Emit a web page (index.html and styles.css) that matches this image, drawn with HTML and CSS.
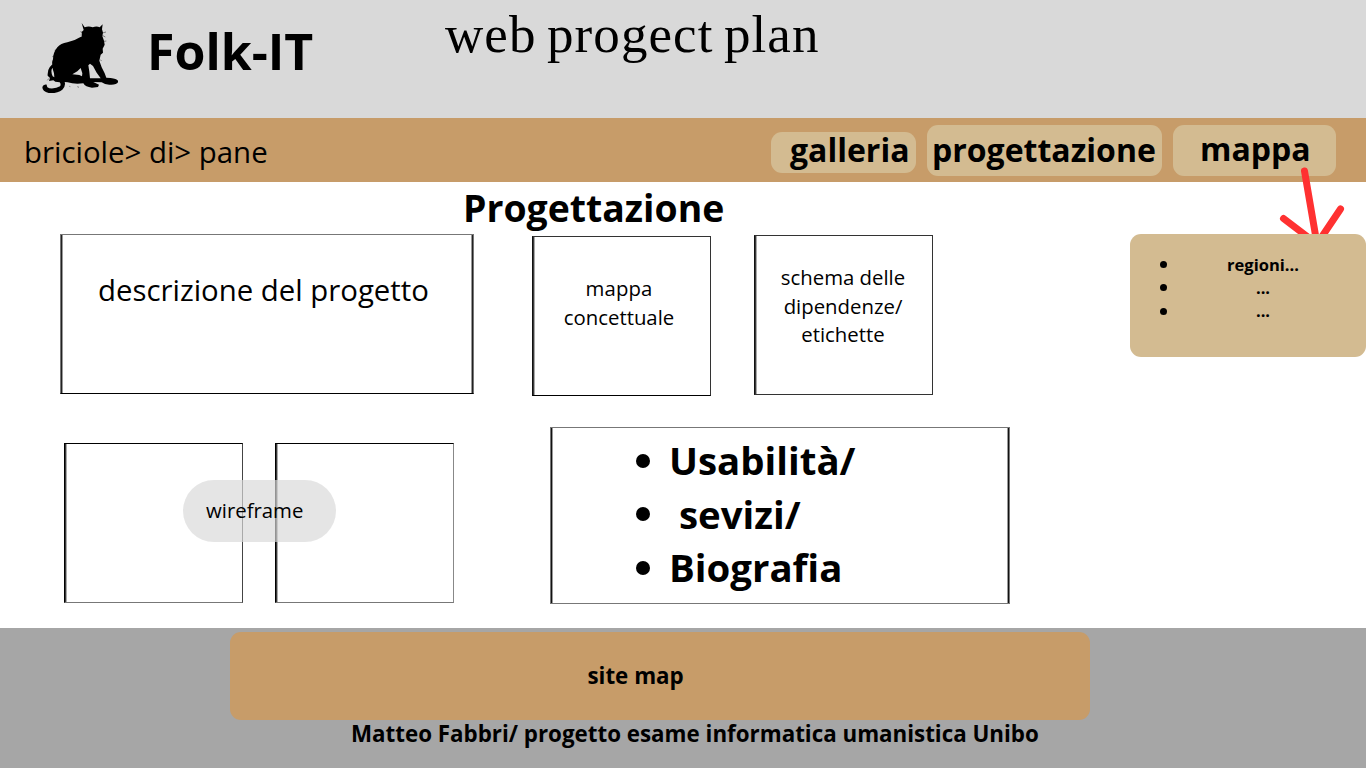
FILE: index.html
```html
<!DOCTYPE html>
<html lang="it">
<head>
<meta charset="utf-8">
<title>Folk-IT</title>
<link rel="stylesheet" href="styles.css">
</head>
<body>
<header class="header">
  <svg class="logo" width="78" height="74" viewBox="30 33 234 222" aria-hidden="true">
    <path fill-rule="evenodd" d="M155 39L164 52Q176 47 188 52Q200 47 209 52L218 43L216 58L219 68L217 78L222 92L224 104L218 116L219 128L212 134L208 152L215 172L224 190L229 203L242 204Q262 206 265 214Q263 224 244 224Q226 226 215 217L190 216L207 224L204 231L186 233Q166 231 160 220Q132 223 113 217L104 216Q108 228 97 239Q82 251 56 249Q37 245 37 231Q40 221 51 224Q48 231 58 235Q78 237 90 229Q94 222 89 217L76 215L70 211L57 213L60 204L53 197Q52 181 59 172L67 163Q65 156 69 148Q69 128 82 112Q92 100 112 97Q134 92 147 83L156 79L155 66L161 60ZM67 173Q61 184 68 199L73 202L72 190ZM152 174L142 184L127 193L148 195L156 199L157 190ZM180 161L175 166L178 185L180 205L212 205L200 188L189 168Z"/>
    <path d="M217 69l11-3M217 76l9 5M221 94l8-1M159 68l-8-3M158 76l-6-1M72 138l-5 2M78 120l-4 1M57 205l-5 6M211 150l4 2M142 230l5 2M118 229l3 1" fill="none" stroke="#000" stroke-width="1.3"/>
  </svg>
  <span class="brand">Folk-IT</span>
  <span class="title">web progect plan</span>
</header>
<nav class="nav">
  <span class="crumbs">briciole&gt; di&gt; pane</span>
  <a class="pill pill-gallery">galleria</a>
  <a class="pill pill-design">progettazione</a>
  <a class="pill pill-map">mappa</a>
  <svg class="arrow" width="70" height="82" viewBox="1276 164 70 82" aria-hidden="true">
    <path d="M1304.500 171L1316.500 241M1283.500 218.500L1317 244L1340.500 209" fill="none" stroke="#ff3131" stroke-width="7" stroke-linecap="round" stroke-linejoin="round"/>
  </svg>
</nav>
<main class="main">
  <h1 class="heading">Progettazione</h1>
  <section class="row row-top">
    <div class="box box-description"><p class="large">descrizione del progetto</p></div>
    <div class="box box-concept"><p>mappa<br>concettuale</p></div>
    <div class="box box-schema"><p>schema delle<br>dipendenze/<br>etichette</p></div>
    <ul class="menu">
      <li><span>regioni...</span></li>
      <li><span>...</span></li>
      <li><span>...</span></li>
    </ul>
  </section>
  <section class="row row-bottom">
    <div class="wireframes">
      <div class="box frame"></div>
      <div class="box frame frame-second"></div>
      <span class="badge">wireframe</span>
    </div>
    <ul class="box topics">
      <li>Usabilità/</li>
      <li>&nbsp;sevizi/</li>
      <li>Biografia</li>
    </ul>
  </section>
</main>
<footer class="footer">
  <div class="sitemap">site map</div>
  <p class="credits">Matteo Fabbri/ progetto esame informatica umanistica Unibo</p>
</footer>
</body>
</html>
```
FILE: styles.css
```css
* { box-sizing: border-box; }
body {
  margin: 0;
  width: 1366px;
  height: 768px;
  overflow: hidden;
  background: #fff;
  color: #000;
  font-family: "Open Sans", "Noto Sans", sans-serif;
}
p, h1, ul { margin: 0; padding: 0; list-style: none; }
.header {
  display: flex;
  align-items: flex-start;
  height: 118px;
  background: #d9d9d9;
  white-space: nowrap;
}
.logo { margin: 21px 0 0 40px; flex: none; }
.brand {
  width: 298px;
  margin: 21px 0 0 26px;
  padding-left: 3px;
  font-size: 50px;
  line-height: 60px;
  font-weight: 700;
}
.title {
  margin: 4px 0 0 3px;
  font-family: "Liberation Serif", serif;
  font-size: 53px;
  line-height: 60px;
  letter-spacing: 1.1px;
  word-spacing: -4px;
}
.nav {
  position: relative;
  display: flex;
  align-items: flex-start;
  height: 64px;
  background: #c79c69;
  white-space: nowrap;
}
.crumbs {
  width: 747px;
  margin: 14px 0 0 24px;
  font-size: 29.400px;
  line-height: 40px;
}
.pill {
  flex: none;
  border-radius: 11px;
  background: #d3bb91;
  font-size: 32px;
  font-weight: 700;
}
.pill-gallery { width: 145px; height: 41px; margin-top: 14px; padding-left: 19px; line-height: 36px; }
.pill-design { width: 235px; height: 51px; margin: 7px 0 0 11px; padding-left: 5px; line-height: 50px; }
.pill-map { width: 163px; height: 51px; margin: 7px 0 0 11px; padding-left: 27px; line-height: 48px; }
.arrow { position: absolute; left: 1276px; top: 46px; }
.main { height: 446px; }
.heading {
  height: 52px;
  padding-left: 463px;
  font-size: 37.400px;
  line-height: 51px;
  font-weight: 700;
}
.row { display: flex; align-items: flex-start; }
.row-top { height: 193px; }
.box {
  flex: none;
  border: 1px solid #333;
  border-left-color: #111;
  box-shadow: inset 1px 0 #3a3a3a, inset 2px 0 #aaa;
  font-size: 20.350px;
  line-height: 28.700px;
  text-align: center;
}
.box-description {
  width: 414px;
  height: 160px;
  margin-left: 60px;
  padding: 35px 7px 0 0;
  border-color: #777 #777 #000;
  box-shadow: inset 1px 0 #222, inset -1px 0 #222, inset 2px 0 #999, inset -2px 0 #999;
}
.large { font-size: 29.350px; line-height: 41px; }
.box-concept { width: 179px; height: 160px; margin: 2px 0 0 58px; padding: 37px 5px 0 0; border-bottom-color: #000; }
.box-concept p::first-line { letter-spacing: .1px; }
.box-schema { width: 179px; height: 160px; margin: 1px 0 0 43px; padding: 27px 1px 0 0; }
.menu {
  position: relative;
  flex: none;
  width: 236px;
  height: 123px;
  margin: 0 0 0 197px;
  padding: 19px 0 0 30px;
  border-radius: 11px;
  background: #d3bb91;
  font-size: 16.500px;
  line-height: 23.200px;
  font-weight: 700;
}
.menu li { display: flex; align-items: center; }
.menu li::before { content: ""; flex: none; width: 7px; height: 7px; border-radius: 50%; background: #000; }
.menu span { width: 192px; text-align: center; }
.wireframes { position: relative; display: flex; width: 550px; padding: 16px 0 0 64px; }
.frame { width: 179px; height: 160px; border-color: #000 #444 #777 #000; }
.frame-second { margin-left: 32px; border-right-color: #888; }
.badge {
  position: absolute;
  left: 183px;
  top: 53px;
  width: 153px;
  height: 62px;
  padding-left: 23px;
  border-radius: 31px;
  background: rgba(217, 217, 217, .68);
  font-size: 20.350px;
  line-height: 61px;
}
.topics {
  width: 460px;
  height: 177px;
  padding: 6px 0 0 85px;
  border-color: #777;
  box-shadow: inset 1px 0 #111, inset -1px 0 #111, inset 2px 0 #999, inset -2px 0 #999;
  font-size: 38.400px;
  line-height: 53.500px;
  font-weight: 700;
  text-align: left;
}
.topics li { display: flex; align-items: center; }
.topics li::before { content: ""; width: 14px; height: 14px; margin-right: 19px; border-radius: 50%; background: #000; }
.footer {
  height: 140px;
  padding-top: 4px;
  background: #a6a6a6;
  font-size: 22.350px;
  font-weight: 700;
  white-space: nowrap;
}
.sitemap {
  width: 860px;
  height: 88px;
  margin-left: 230px;
  padding-left: 357.500px;
  border-radius: 11px;
  background: #c79c69;
  line-height: 88px;
}
.credits { margin-left: 351px; line-height: 28px; }
```
